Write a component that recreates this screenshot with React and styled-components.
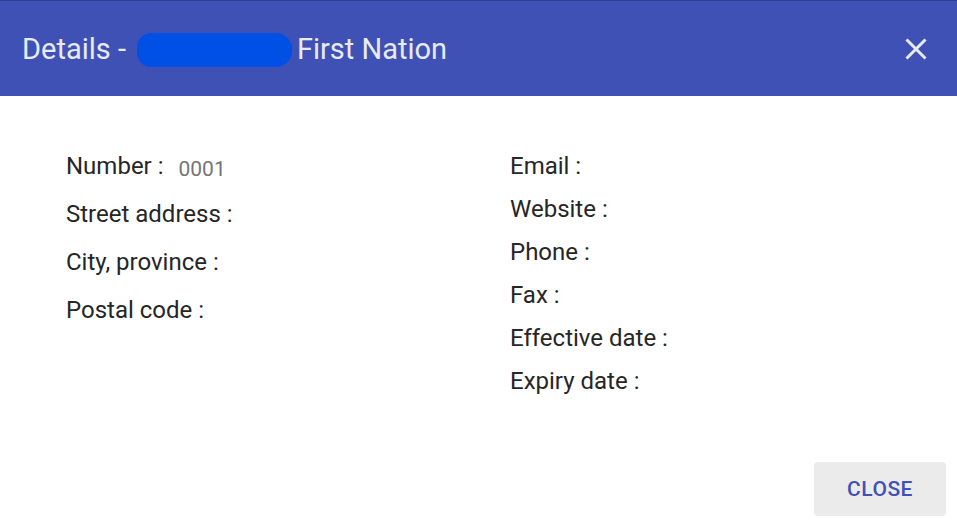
import React from "react";
import styled, { createGlobalStyle } from "styled-components";

const GlobalStyle = createGlobalStyle`
  html, body {
    margin: 0;
    padding: 0;
    background: #fff;
  }
  body {
    font-family: Roboto, "Noto Sans", Arial, sans-serif;
  }
`;

const Dialog = styled.div`
  width: 957px;
  height: 523px;
  display: flex;
  flex-direction: column;
  background: #fff;
  overflow: hidden;
`;

const Header = styled.div`
  height: 96px;
  flex-shrink: 0;
  display: flex;
  align-items: center;
  justify-content: space-between;
  padding: 0 30px 0 22px;
  background-color: #3f51b5;
  border-top: 1px solid #2f3d8c;
  box-sizing: border-box;
`;

const Title = styled.h2`
  margin: 0;
  display: flex;
  align-items: center;
  font-size: 29px;
  font-weight: 400;
  color: #e8eaf6;
`;

const Redacted = styled.span`
  display: inline-block;
  width: 155px;
  height: 34px;
  margin: 2px 5px 0 11px;
  background: #0050e6;
  border-radius: 14px 16px 16px 14px;
`;

const CloseIcon = styled.button`
  border: none;
  background: none;
  padding: 0;
  width: 22px;
  height: 22px;
  display: flex;
  cursor: pointer;
`;

const Body = styled.div`
  flex: 1;
  display: grid;
  grid-template-columns: 444px 1fr;
  align-items: start;
  padding: 46px 0 0 66px;
  box-sizing: border-box;
`;

const Column = styled.div`
  display: flex;
  flex-direction: column;
  padding-top: ${(p) => p.offset || 0}px;
`;

const Row = styled.div`
  height: ${(p) => p.h}px;
  display: flex;
  align-items: center;
  font-size: 24px;
  color: #262626;
`;

const Value = styled.span`
  margin-left: 15px;
  font-size: 21px;
  color: #757575;
  position: relative;
  top: 3px;
`;

const Footer = styled.div`
  display: flex;
  justify-content: flex-end;
  padding: 0 11px 7px 0;
`;

const Button = styled.button`
  width: 132px;
  height: 54px;
  border: none;
  border-radius: 4px;
  background-color: #ebebeb;
  color: #3f51b5;
  font-family: Roboto, Arial, sans-serif;
  font-size: 21px;
  font-weight: 500;
  letter-spacing: 0.5px;
  cursor: pointer;
`;

const left = [
  ["Number :", "0001"],
  ["Street address :"],
  ["City, province :"],
  ["Postal code :"],
];

const right = [
  "Email :",
  "Website :",
  "Phone :",
  "Fax :",
  "Effective date :",
  "Expiry date :",
];

const App = () => {
  return (
    <Dialog>
      <GlobalStyle />
      <Header>
        <Title>
          Details -<Redacted />First Nation
        </Title>
        <CloseIcon aria-label="close">
          <svg width="22" height="22" viewBox="0 0 22 22">
            <path
              d="M1.5 1.5 L20.5 20.5 M20.5 1.5 L1.5 20.5"
              stroke="#e8eaf6"
              strokeWidth="3"
              fill="none"
            />
          </svg>
        </CloseIcon>
      </Header>
      <Body>
        <Column>
          {left.map(([label, value]) => (
            <Row key={label} h={48}>
              {label}
              {value && <Value>{value}</Value>}
            </Row>
          ))}
        </Column>
        <Column offset={2}>
          {right.map((label) => (
            <Row key={label} h={43}>
              {label}
            </Row>
          ))}
        </Column>
      </Body>
      <Footer>
        <Button>CLOSE</Button>
      </Footer>
    </Dialog>
  );
};

export default App;
